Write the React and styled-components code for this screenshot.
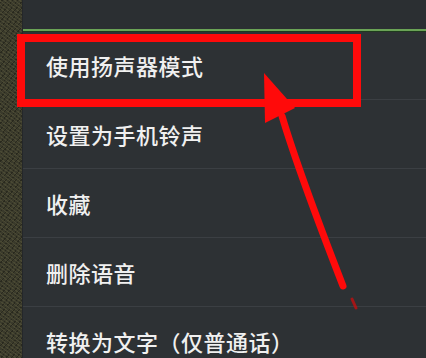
import React from "react";
import styled, { createGlobalStyle } from "styled-components";

const Global = createGlobalStyle`
  html, body {
    margin: 0;
    padding: 0;
    background: #2d3134;
  }
  #root {
    width: 426px;
    height: 358px;
    overflow: hidden;
  }
`;

const Screen = styled.div`
  position: relative;
  display: flex;
  width: 426px;
  height: 358px;
  overflow: hidden;
  font-family: "Noto Sans CJK SC", "Noto Sans", sans-serif;
`;

const Table = styled.div`
  width: 22px;
  flex: none;
  background-color: #3a3a2b;
  background-image: repeating-linear-gradient(
      37deg,
      rgba(90, 88, 60, 0.5) 0 1px,
      transparent 1px 3px
    ),
    repeating-linear-gradient(
      -51deg,
      rgba(20, 20, 14, 0.45) 0 1px,
      transparent 1px 4px
    );
  border-right: 1px solid #24272a;
`;

const Panel = styled.div`
  flex: 1;
  display: flex;
  flex-direction: column;
  background: #2d3134;
`;

const TitleBar = styled.div`
  flex: none;
  height: 29px;
  background: #2b2f32;
`;

const GreenRule = styled.div`
  flex: none;
  height: 2px;
  background: #6aa356;
  box-shadow: 0 1px 0 #1f3a1e;
`;

const Menu = styled.ul`
  flex: none;
  list-style: none;
  margin: 0;
  padding: 0;
`;

const Item = styled.li`
  height: 68px;
  display: flex;
  align-items: center;
  padding-left: 23px;
  color: #f0f0f0;
  font-size: 22px;
  font-weight: 500;
  letter-spacing: 0.5px;
  border-bottom: 1px solid #3b3f43;
`;

const Highlight = styled.div`
  position: absolute;
  left: 17px;
  top: 34px;
  width: 344px;
  height: 73px;
  box-sizing: border-box;
  border: 8px solid #ff0a0a;
`;

const Arrow = styled.svg`
  position: absolute;
  inset: 0;
  pointer-events: none;
`;

const items = [
  "使用扬声器模式",
  "设置为手机铃声",
  "收藏",
  "删除语音",
  "转换为文字（仅普通话）",
];

export default function App() {
  return (
    <Screen>
      <Global />
      <Table />
      <Panel>
        <TitleBar />
        <GreenRule />
        <Menu>
          {items.map((t) => (
            <Item key={t}>{t}</Item>
          ))}
        </Menu>
      </Panel>
      <Highlight />
      <Arrow width="426" height="358" viewBox="0 0 426 358">
        <path
          d="M282 116 Q298 170 343 286"
          fill="none"
          stroke="#ff0a0a"
          strokeWidth="7"
          strokeLinecap="round"
        />
        <polygon points="264,73 265,123 295,108" fill="#ff0a0a" />
        <path
          d="M352 299 L356 308"
          stroke="#c01010"
          strokeWidth="3"
          strokeLinecap="round"
          opacity="0.8"
        />
      </Arrow>
    </Screen>
  );
}
